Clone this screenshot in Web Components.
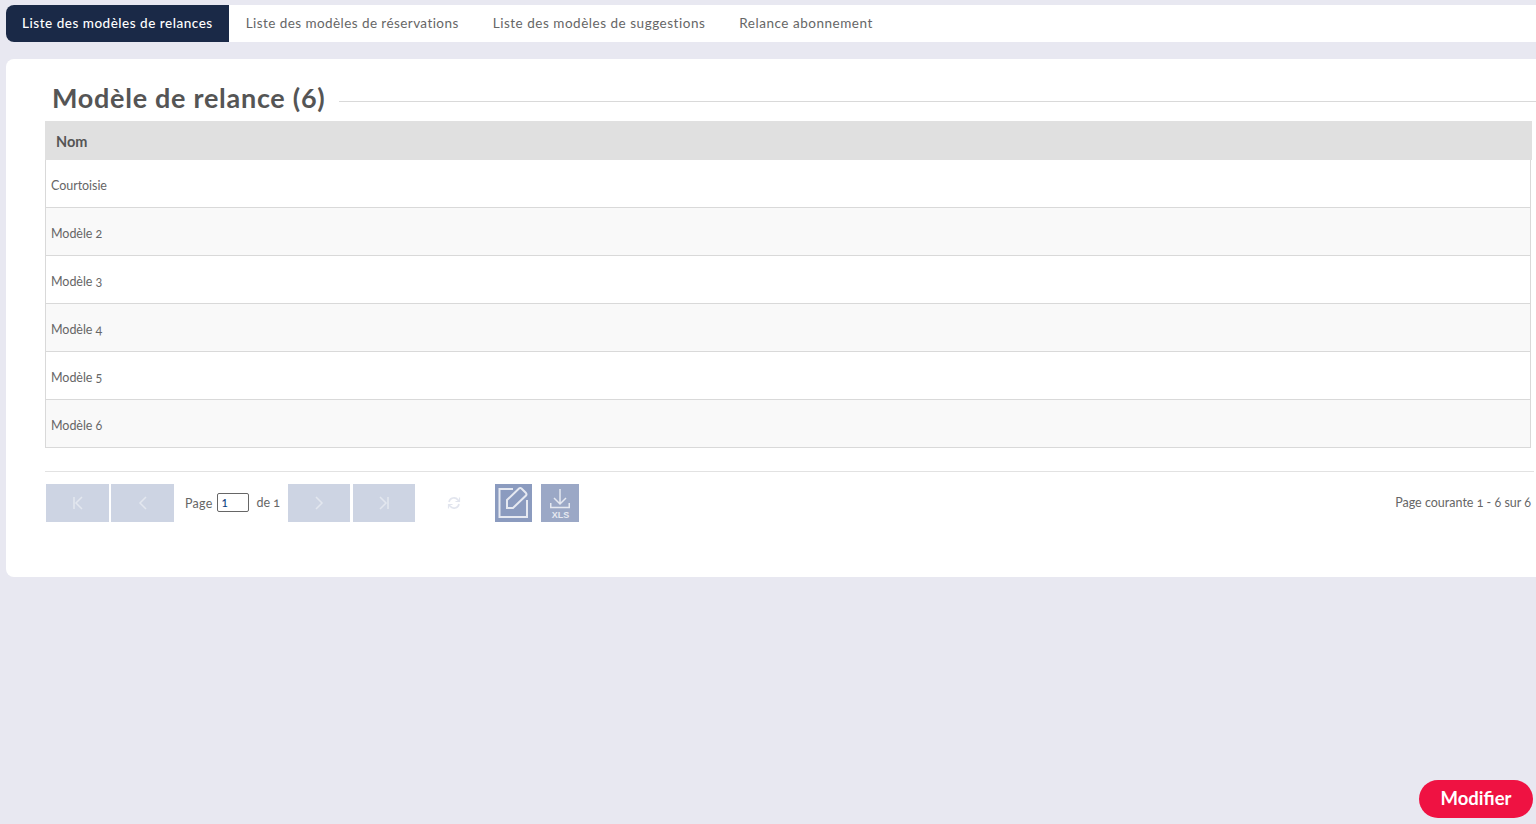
<!DOCTYPE html>
<html lang="fr">
<head>
<meta charset="utf-8">
<title>Modèles de relance</title>
<style>
  html, body { height: 100%; }
  body {
    margin: 0;
    background: #e8e8f1;
    font-family: Lato, "Open Sans", "Liberation Sans", sans-serif;
    color: #555;
    overflow: hidden;
  }
  #page { display: flex; flex-direction: column; height: 824px; padding: 5px 0 6px 6px; box-sizing: border-box; }
</style>
</head>
<body>
<div id="page">
  <tab-bar>
    <tab-item active>Liste des modèles de relances</tab-item>
    <tab-item>Liste des modèles de réservations</tab-item>
    <tab-item wide>Liste des modèles de suggestions</tab-item>
    <tab-item wide>Relance abonnement</tab-item>
  </tab-bar>
  <list-panel heading="Modèle de relance (6)">
    <list-table column="Nom">
      <list-row>Courtoisie</list-row>
      <list-row>Modèle 2</list-row>
      <list-row>Modèle 3</list-row>
      <list-row>Modèle 4</list-row>
      <list-row>Modèle 5</list-row>
      <list-row>Modèle 6</list-row>
    </list-table>
    <list-pager></list-pager>
  </list-panel>
  <page-footer>Modifier</page-footer>
</div>

<script>
class TabBar extends HTMLElement {
  constructor() {
    super();
    this.attachShadow({ mode: "open" }).innerHTML = `
      <style>
        :host { display: flex; height: 37px; background: #fff; border-radius: 8px 0 0 8px; }
      </style>
      <slot></slot>`;
  }
}
customElements.define("tab-bar", TabBar);

class TabItem extends HTMLElement {
  constructor() {
    super();
    this.attachShadow({ mode: "open" }).innerHTML = `
      <style>
        :host {
          display: flex; align-items: center; padding: 0 17px 1px;
          font-size: 13.5px; letter-spacing: .43px; color: #666; white-space: nowrap;
        }
        :host([wide]) { letter-spacing: .52px; }
        :host([active]) {
          background: #1a2947; color: #fff; border-radius: 8px 0 0 8px;
          font-weight: 500; padding: 0 16px 1px; letter-spacing: .52px;
        }
      </style>
      <slot></slot>`;
  }
}
customElements.define("tab-item", TabItem);

class ListPanel extends HTMLElement {
  constructor() {
    super();
    this.attachShadow({ mode: "open" }).innerHTML = `
      <style>
        :host {
          display: block; height: 518px; margin-top: 17px; background: #fff;
          border-radius: 8px 0 0 8px; padding: 22px 0 0 39px; box-sizing: border-box;
        }
        header { display: flex; align-items: center; height: 40px; padding-left: 7px; }
        h1 {
          margin: 0; padding-bottom: 6px; font-size: 27px; font-weight: 700; color: #555; white-space: nowrap;
          line-height: 34px; letter-spacing: .72px;
        }
        i { flex: 1; height: 1px; background: #d9d9d9; margin: 1px 0 0 14px; }
      </style>
      <header><h1></h1><i></i></header>
      <slot></slot>`;
    this.shadowRoot.querySelector("h1").textContent = this.getAttribute("heading");
  }
}
customElements.define("list-panel", ListPanel);

class ListTable extends HTMLElement {
  constructor() {
    super();
    this.attachShadow({ mode: "open" }).innerHTML = `
      <style>
        :host { display: block; margin-right: 4px; }
        .head {
          height: 39px; box-sizing: border-box; background: #e0e0e0; display: flex; align-items: center;
          padding: 2px 0 0 11px; font-size: 14.5px; font-weight: 700; color: #555;
        }
        .body { margin-right: 1px; border: solid #d9d9d9; border-width: 0 1px; }
      </style>
      <div class="head"></div>
      <div class="body"><slot></slot></div>`;
    this.shadowRoot.querySelector(".head").textContent = this.getAttribute("column");
  }
}
customElements.define("list-table", ListTable);

class ListRow extends HTMLElement {
  constructor() {
    super();
    this.attachShadow({ mode: "open" }).innerHTML = `
      <style>
        :host {
          display: flex; align-items: center; height: 48px; box-sizing: border-box;
          border-bottom: 1px solid #d9d9d9; padding: 4px 0 0 5px;
          font-size: 12.5px; letter-spacing: -.05px; color: #666;
          font-variant-numeric: oldstyle-nums; background: #fff;
        }
        :host(:nth-child(even)) { background: #f9f9f9; }
      </style>
      <slot></slot>`;
  }
}
customElements.define("list-row", ListRow);

class PagerButton extends HTMLElement {
  constructor() {
    super();
    const paths = {
      first: "M3 1v12M11 1 5 7l6 6",
      prev: "M10 1 4 7l6 6",
      next: "M4 1l6 6-6 6",
      last: "M3 1l6 6-6 6M11 1v12"
    };
    this.attachShadow({ mode: "open" }).innerHTML = `
      <style>
        :host { display: flex; align-items: center; justify-content: center; width: 63px; height: 38px; background: #cdd4e3; }
        :host([narrow]) { width: 62px; }
        svg { width: 14px; height: 14px; fill: none; stroke: #e3e7ef; stroke-width: 1.5; }
      </style>
      <svg viewBox="0 0 14 14"><path d="${paths[this.getAttribute("kind")]}"/></svg>`;
  }
}
customElements.define("pager-button", PagerButton);

class ListPager extends HTMLElement {
  constructor() {
    super();
    this.attachShadow({ mode: "open" }).innerHTML = `
      <style>
        :host {
          display: flex; align-items: center; height: 38px; margin: 23px 2px 0 0;
          border-top: 1px solid #e2e2e2; padding: 12px 0 0 1px; font-size: 12.5px; color: #666;
          font-variant-numeric: oldstyle-nums;
        }
        .gap2 { margin-left: 2px; }
        .gap3 { margin-left: 3px; }
        .label { margin-left: 11px; padding-top: 1px; letter-spacing: .25px; }
        input {
          width: 32px; height: 19px; box-sizing: border-box; margin: -1px 8px 0 4px; padding: 0 0 1px 4px;
          border: 1px solid #666; border-radius: 2px; font: 500 11px Lato, sans-serif; color: #0a3d80; background: #fff;
        }
        .de { width: 31px; padding-bottom: 1px; }
        .refresh { margin: 0 34px 0 32px; width: 14px; height: 14px; }
        .edit, .xls { display: flex; height: 38px; align-items: center; justify-content: center; }
        .edit { width: 37px; background: #8b9bbf; margin-right: 9px; }
        .xls { width: 38px; background: #9ba8c6; }
        .total { margin-left: auto; margin-right: 3px; padding-bottom: 1px; }
      </style>
      <pager-button kind="first"></pager-button>
      <pager-button kind="prev" class="gap2"></pager-button>
      <span class="label">Page</span>
      <input value="1" aria-label="Page">
      <span class="de">de 1</span>
      <pager-button kind="next" narrow></pager-button>
      <pager-button kind="last" narrow class="gap3"></pager-button>
      <svg class="refresh" viewBox="0 0 14 14" fill="none" stroke="#e2e5ee" stroke-width="1.6">
        <path d="M2 6a5 5 0 0 1 9-2l1 1.5M12 8a5 5 0 0 1-9 2L2 8.500"/>
        <path d="M12.500 1.500v4h-4M1.500 12.500v-4h4" stroke-width="1.200"/>
      </svg>
      <span class="edit">
        <svg width="37" height="38" viewBox="0 0 37 38" fill="none" stroke="#e6e9f1" stroke-width="2">
          <path d="M18 5H4.500v28H32V16"/>
          <path d="M12 24v-8L24 4.500a2 2 0 0 1 2.500 0l4.500 4.500a2 2 0 0 1 0 2.500L18 24z"/>
        </svg>
      </span>
      <span class="xls">
        <svg width="38" height="38" viewBox="0 0 38 38" fill="none" stroke="#e6e9f1" stroke-width="1.500">
          <path d="M19 5v15M13 14l6 6 6-6M9.750 19v4.500h18.500V19"/>
          <text x="19.500" y="34" text-anchor="middle" font-family="Liberation Sans, sans-serif" font-size="9" font-weight="700" fill="#e6e9f1" stroke="none">XLS</text>
        </svg>
      </span>
      <span class="total">Page courante 1 - 6 sur 6</span>`;
  }
}
customElements.define("list-pager", ListPager);

class PageFooter extends HTMLElement {
  constructor() {
    super();
    this.attachShadow({ mode: "open" }).innerHTML = `
      <style>
        :host { display: flex; justify-content: flex-end; margin-top: auto; padding-right: 3px; }
        button {
          width: 114px; height: 38px; border: 0; border-radius: 19px; background: #ef1242; color: #fff;
          padding: 0 0 2px; font: 700 18.5px Lato, sans-serif;
        }
      </style>
      <button><slot></slot></button>`;
  }
}
customElements.define("page-footer", PageFooter);
</script>
</body>
</html>
